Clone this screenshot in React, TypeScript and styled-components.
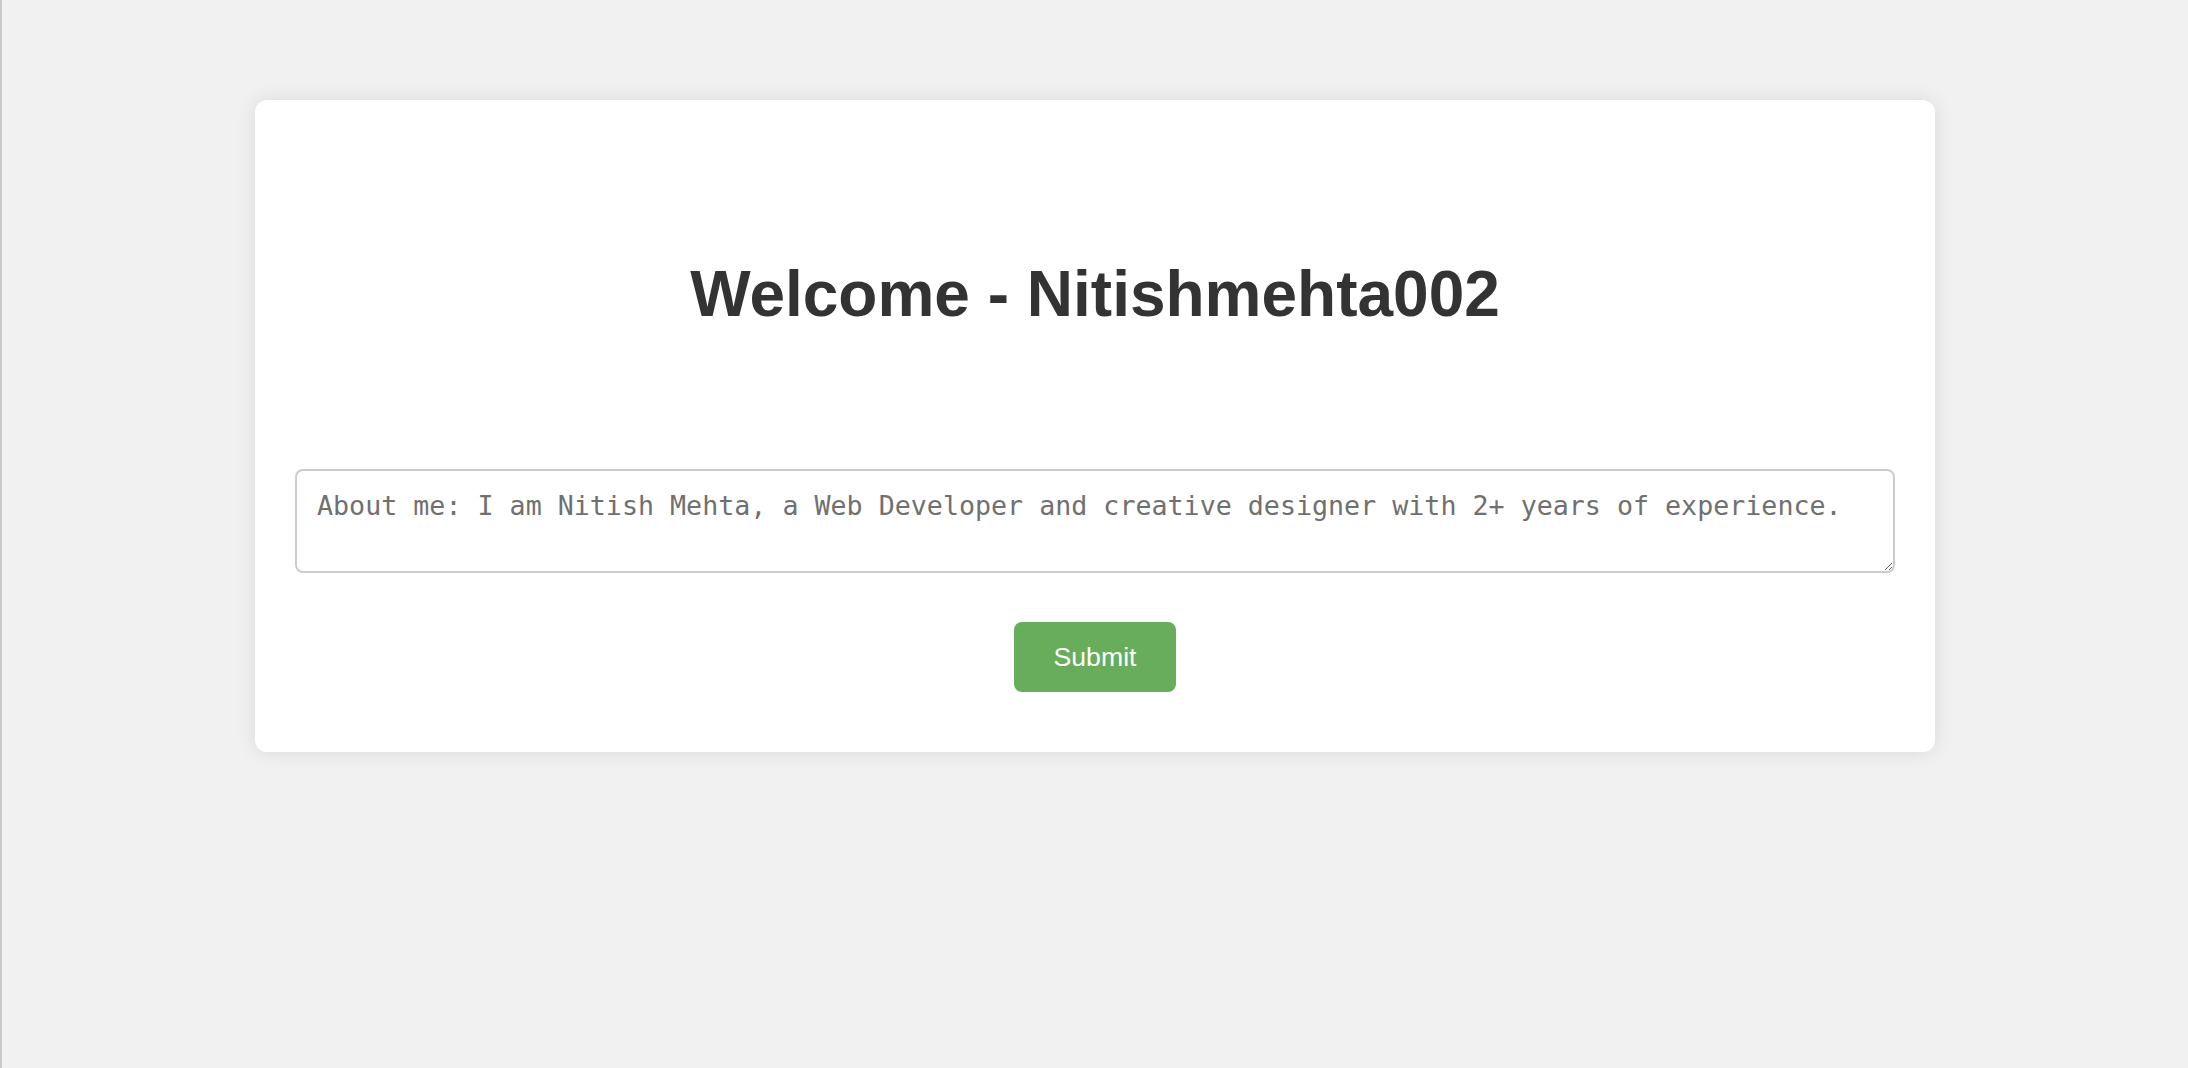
import React from "react";
import styled, { createGlobalStyle } from "styled-components";

const GlobalStyle = createGlobalStyle`
  html, body {
    margin: 0;
    padding: 0;
    background: #f1f1f1;
  }
  body {
    min-height: 1068px;
    border-left: 2px solid #c9c9c9;
    box-sizing: border-box;
    font-family: "Liberation Sans", Arial, sans-serif;
  }
`;

const Page = styled.div`
  display: flex;
  justify-content: center;
  padding-top: 100px;
  padding-left: 2px;
  margin-left: -2px;
`;

const Card = styled.div`
  width: 1680px;
  box-sizing: border-box;
  background: #ffffff;
  border-radius: 12px;
  box-shadow: 0 0 20px rgba(0, 0, 0, 0.1);
  padding: 40px 40px 60px;
  display: flex;
  flex-direction: column;
  align-items: center;
`;

const Title = styled.h1`
  margin: 117px 0 138px;
  font-family: "Liberation Sans", Arial, sans-serif;
  font-size: 64px;
  font-weight: 700;
  color: #333333;
  text-align: center;
`;

const AboutField = styled.textarea`
  width: 100%;
  height: 104px;
  box-sizing: border-box;
  padding: 19px 20px 20px;
  border: 2px solid #cccccc;
  border-radius: 8px;
  font-family: "DejaVu Sans Mono", monospace;
  font-size: 26.67px;
  color: #333;
  background: #fff;
  resize: vertical;
  outline: none;

  &::placeholder {
    color: #707070;
  }
`;

const SubmitButton = styled.button`
  margin-top: 49px;
  padding: 20px 40px;
  border: none;
  border-radius: 8px;
  background: #67ad5b;
  color: #ffffff;
  font-family: "Liberation Sans", Arial, sans-serif;
  font-size: 26.67px;
  line-height: 30px;
  cursor: pointer;
`;

export default function App() {
  return (
    <>
      <GlobalStyle />
      <Page>
        <Card>
          <Title>Welcome - Nitishmehta002</Title>
          <AboutField placeholder="About me: I am Nitish Mehta, a Web Developer and creative designer with 2+ years of experience." />
          <SubmitButton>Submit</SubmitButton>
        </Card>
      </Page>
    </>
  );
}
